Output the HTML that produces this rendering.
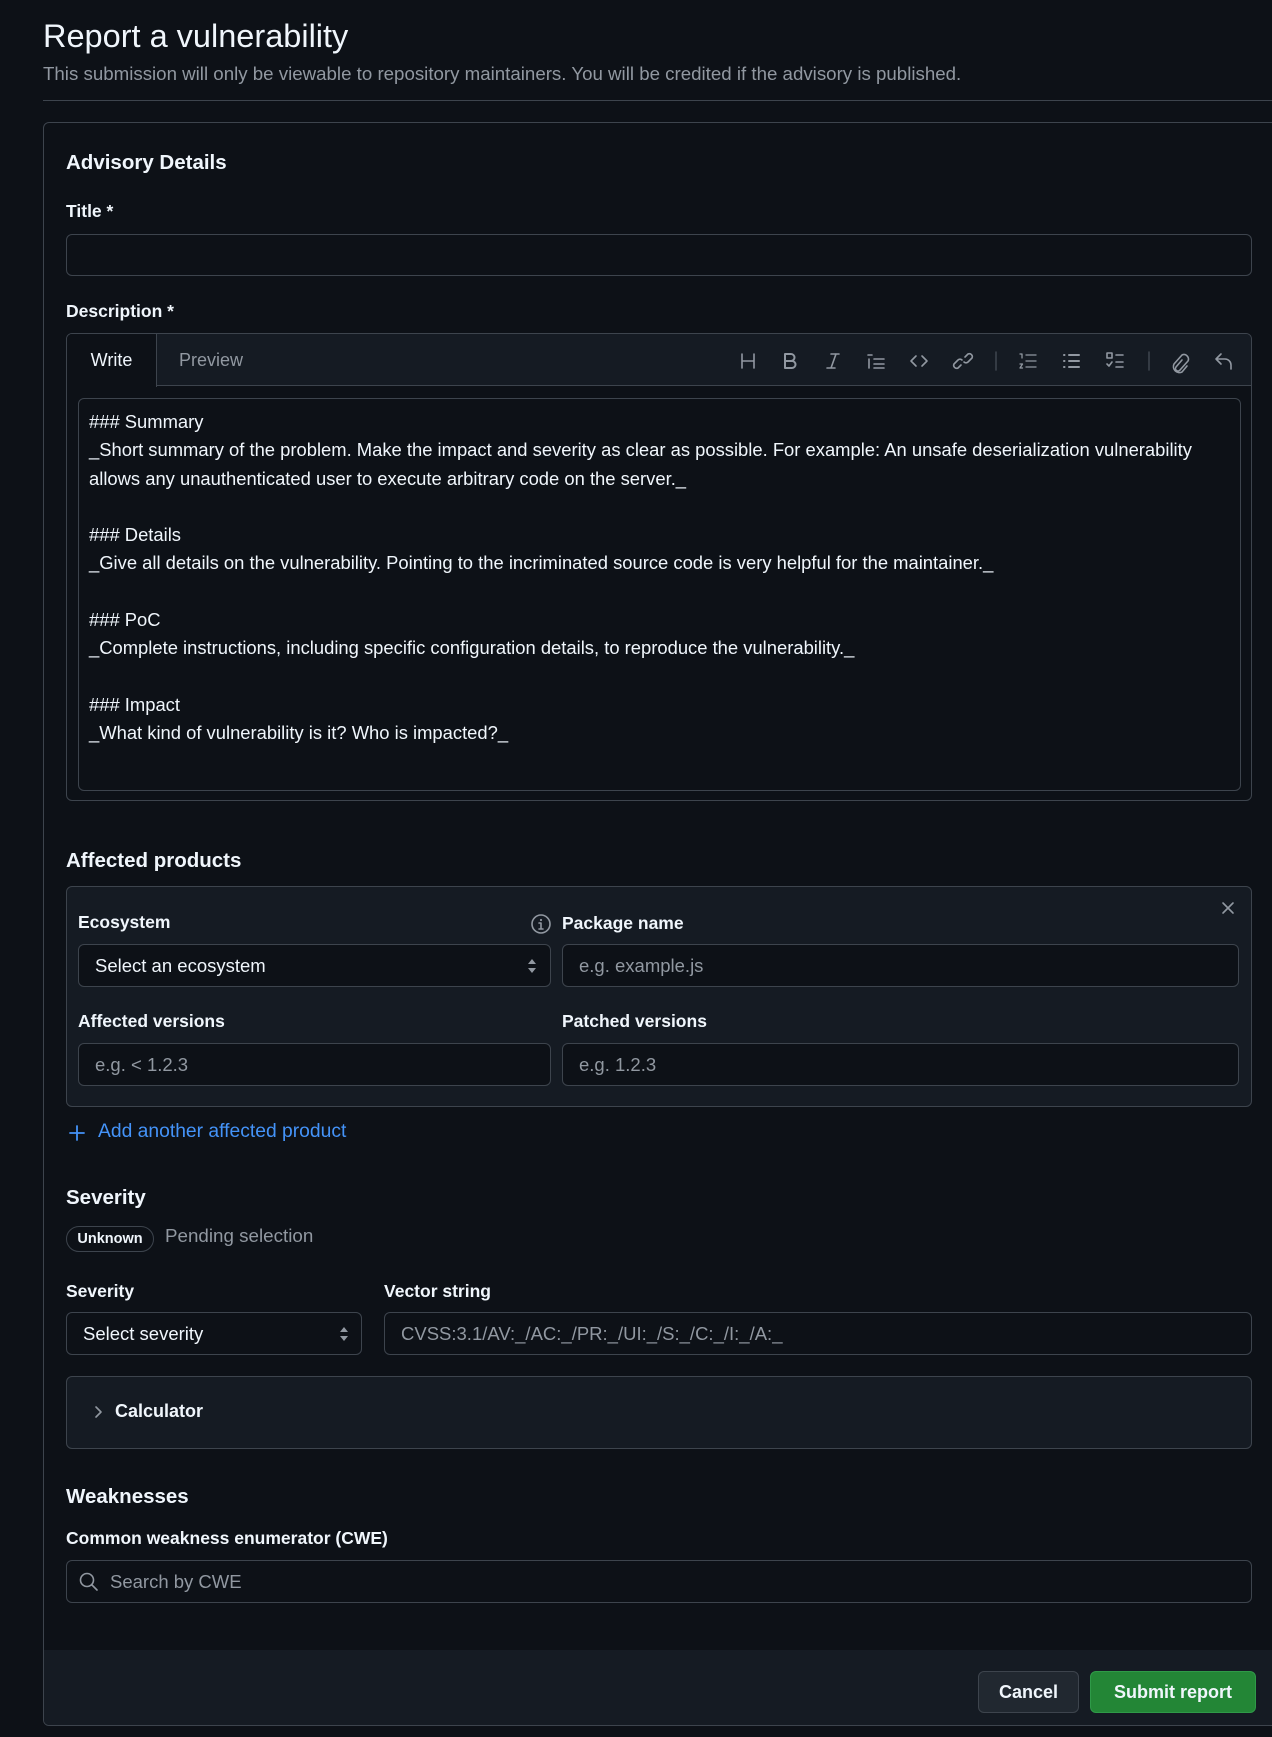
<!DOCTYPE html>
<html><head><meta charset="utf-8"><style>
*{box-sizing:border-box;margin:0;padding:0}
body{width:1272px;height:1737px;background:#0d1117;color:#f0f6fc;font-family:"Liberation Sans",sans-serif;position:relative;overflow:hidden;font-size:16px}
.a{position:absolute}
.lbl{position:absolute;font-weight:bold;font-size:17.5px;color:#f0f6fc}
.h{position:absolute;font-weight:bold;font-size:20.5px}
.inp{position:absolute;border:1px solid #3d444d;border-radius:6px;background:#0d1117;color:#9198a1;font-size:18.5px;padding-left:16px;display:flex;align-items:center}
.ic{stroke:#9198a1;fill:none;stroke-width:1.6;stroke-linecap:round;stroke-linejoin:round}
</style></head><body>
<div class="a" style="left:43px;top:18px;font-size:32.5px;color:#f0f6fc">Report a vulnerability</div>
<div class="a" style="left:43px;top:63px;font-size:18.7px;color:#9198a1">This submission will only be viewable to repository maintainers. You will be credited if the advisory is published.</div>
<div class="a" style="left:43px;top:100px;width:1229px;height:1px;background:#3d444d"></div>
<div class="a" style="left:43px;top:122px;width:1240px;height:1604px;border:1px solid #3d444d;border-radius:6px;overflow:hidden">
 <div class="a" style="left:0;top:1527px;width:100%;height:80px;background:#151b23"></div>
</div>
<div class="h" style="left:66px;top:151px">Advisory Details</div>
<div class="lbl" style="left:66px;top:201px">Title *</div>
<div class="inp" style="left:66px;top:234px;width:1186px;height:42px"></div>
<div class="lbl" style="left:66px;top:301px">Description *</div>
<div class="a" style="left:66px;top:333px;width:1186px;height:468px;border:1px solid #3d444d;border-radius:6px;overflow:hidden">
 <div class="a" style="left:0;top:0;width:100%;height:52px;background:#151b23;border-bottom:1px solid #3d444d"></div>
 <div class="a" style="left:0;top:0;width:90px;height:53px;background:#0d1117;border-right:1px solid #3d444d;font-size:18px;display:flex;align-items:center;justify-content:center">Write</div>
 <div class="a" style="left:112px;top:16px;font-size:18px;color:#9198a1">Preview</div>
 <svg class="a" style="left:660px;top:14px" width="520" height="26" viewBox="0 0 520 26">
  <g class="ic">
   <g transform="translate(21,13)"><path d="M-6 -7v14M6 -7v14M-6 0h12"/></g>
   <g transform="translate(63,13)"><path d="M-5 -7h6a3.5 3.5 0 010 7h-6zM-5 0h7a3.5 3.5 0 010 7h-7z" stroke-width="2"/></g>
   <g transform="translate(106,13)"><path d="M-2 -7h8M-6 7h8M3 -7l-5 14"/></g>
   <g transform="translate(149,13)"><path d="M-8 -6h4M-7 -2v9M-2 -2h10M-2 3h10M-2 7h10"/></g>
   <g transform="translate(192,13)"><path d="M-3 -5l-5 5 5 5M3 -5l5 5-5 5"/></g>
   <g transform="translate(236,13)"><path d="M-2 4l-3 3a3 3 0 01-4-4l4-4a3 3 0 014 0M2 -4l3-3a3 3 0 014 4l-4 4a3 3 0 01-4 0"/></g>
   <path d="M269 4v18" stroke="#3d444d"/>
   <g transform="translate(301,13)"><path d="M-2 -6h10M-2 0h10M-2 6h10M-8 -7h2v4M-8 3h2.5l-2.5 4h2.5" stroke-width="1.3"/></g>
   <g transform="translate(344,13)"><path d="M-2 -6h10M-2 0h10M-2 6h10M-7 -6h.5M-7 0h.5M-7 6h.5" stroke-width="2"/></g>
   <g transform="translate(388,13)"><path d="M-8 -8h5v5h-5zM1 -6h7M1 1h7M1 6h7M-8 3l2 2 3-4"/></g>
   <path d="M422 4v18" stroke="#3d444d"/>
   <g transform="translate(454,13)"><path d="M1 -1l-6 7a2.5 2.5 0 004 3l8-9a4.5 4.5 0 00-6-6l-8 9a6 6 0 008 8l5-6"/></g>
   <g transform="translate(497,13)"><path d="M-3 -7l-5 5 5 5M-8 -2h9a6 6 0 016 6v4"/></g>
  </g>
 </svg>
 <div class="a" style="left:11px;top:64px;width:1163px;height:393px;border:1px solid #3d444d;border-radius:6px;background:#0d1117"></div>
 <div class="a" style="left:22px;top:74px;font-size:18.4px;line-height:28.3px;white-space:pre;color:#f0f6fc">### Summary
_Short summary of the problem. Make the impact and severity as clear as possible. For example: An unsafe deserialization vulnerability
allows any unauthenticated user to execute arbitrary code on the server._

### Details
_Give all details on the vulnerability. Pointing to the incriminated source code is very helpful for the maintainer._

### PoC
_Complete instructions, including specific configuration details, to reproduce the vulnerability._

### Impact
_What kind of vulnerability is it? Who is impacted?_</div>
</div>
<div class="h" style="left:66px;top:849px">Affected products</div>
<div class="a" style="left:66px;top:886px;width:1186px;height:221px;border:1px solid #3d444d;border-radius:6px;background:#151b23"></div>
<svg class="a" style="left:1221px;top:901px" width="14" height="14"><path d="M2 2l10 10M12 2L2 12" class="ic" stroke-width="1.8"/></svg>
<div class="lbl" style="left:78px;top:912px">Ecosystem</div>
<svg class="a" style="left:530px;top:913px" width="22" height="22"><circle cx="11" cy="11" r="9" class="ic"/><path d="M11 10v6M9 16h4M9 10h2" class="ic"/><circle cx="11" cy="7" r="1.1" fill="#9198a1"/></svg>
<div class="lbl" style="left:562px;top:913px">Package name</div>
<div class="inp" style="left:78px;top:944px;width:473px;height:43px;color:#f0f6fc">Select an ecosystem</div>
<svg class="a" style="left:527px;top:958px" width="10" height="16"><path d="M1 6l4-5 4 5zM1 10l4 5 4-5z" fill="#9198a1"/></svg>
<div class="inp" style="left:562px;top:944px;width:677px;height:43px">e.g. example.js</div>
<div class="lbl" style="left:78px;top:1011px">Affected versions</div>
<div class="lbl" style="left:562px;top:1011px">Patched versions</div>
<div class="inp" style="left:78px;top:1043px;width:473px;height:43px">e.g. &lt; 1.2.3</div>
<div class="inp" style="left:562px;top:1043px;width:677px;height:43px">e.g. 1.2.3</div>
<svg class="a" style="left:68px;top:1124px" width="18" height="18"><path d="M9 2v14M2 9h14" stroke="#4493f8" stroke-width="1.8" stroke-linecap="round"/></svg>
<div class="a" style="left:98px;top:1121px;font-size:19.3px;color:#4493f8">Add another affected product</div>
<div class="h" style="left:66px;top:1186px">Severity</div>
<div class="a" style="left:66px;top:1226px;width:88px;height:26px;border:1px solid #3d444d;border-radius:13px;font-size:14.5px;font-weight:bold;display:flex;align-items:center;justify-content:center">Unknown</div>
<div class="a" style="left:165px;top:1225px;font-size:18.8px;color:#9198a1">Pending selection</div>
<div class="lbl" style="left:66px;top:1281px">Severity</div>
<div class="lbl" style="left:384px;top:1281px">Vector string</div>
<div class="inp" style="left:66px;top:1312px;width:296px;height:43px;color:#f0f6fc">Select severity</div>
<svg class="a" style="left:339px;top:1326px" width="10" height="16"><path d="M1 6l4-5 4 5zM1 10l4 5 4-5z" fill="#9198a1"/></svg>
<div class="inp" style="left:384px;top:1312px;width:868px;height:43px">CVSS:3.1/AV:_/AC:_/PR:_/UI:_/S:_/C:_/I:_/A:_</div>
<div class="a" style="left:66px;top:1376px;width:1186px;height:73px;border:1px solid #3d444d;border-radius:6px;background:#151b23"></div>
<svg class="a" style="left:93px;top:1404px" width="12" height="16"><path d="M3 3l5 5-5 5" class="ic" stroke="#f0f6fc" stroke-width="2"/></svg>
<div class="lbl" style="left:115px;top:1401px;font-size:18px">Calculator</div>
<div class="h" style="left:66px;top:1485px">Weaknesses</div>
<div class="lbl" style="left:66px;top:1528px">Common weakness enumerator (CWE)</div>
<div class="inp" style="left:66px;top:1560px;width:1186px;height:43px;padding-left:43px">Search by CWE</div>
<svg class="a" style="left:78px;top:1571px" width="22" height="22"><circle cx="9" cy="9" r="6.5" class="ic" stroke-width="1.8"/><path d="M14 14l5 5" class="ic" stroke-width="1.8"/></svg>
<div class="a" style="left:978px;top:1671px;width:101px;height:42px;border:1px solid #3d444d;border-radius:6px;background:#212830;font-weight:bold;font-size:18px;display:flex;align-items:center;justify-content:center">Cancel</div>
<div class="a" style="left:1090px;top:1671px;width:166px;height:42px;border:1px solid #2f9a48;border-radius:6px;background:#238636;font-weight:bold;font-size:18px;display:flex;align-items:center;justify-content:center">Submit report</div>
</body></html>
